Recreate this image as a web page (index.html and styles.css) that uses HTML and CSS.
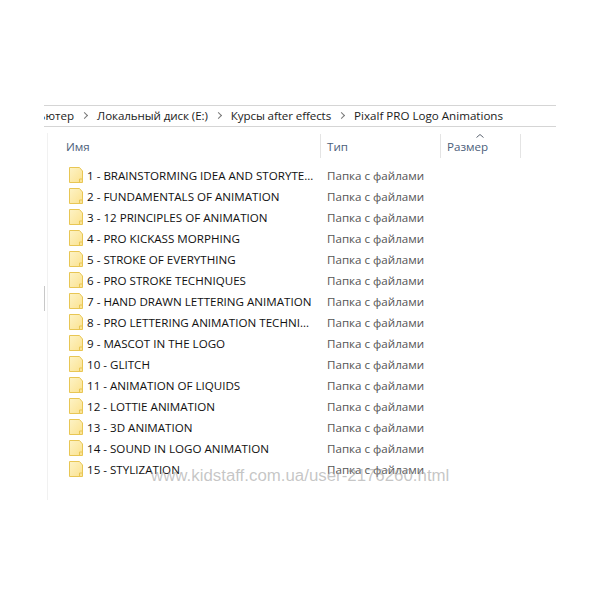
FILE: index.html
```html
<!DOCTYPE html>
<html lang="ru">
<head>
<meta charset="utf-8">
<title>Pixalf PRO Logo Animations</title>
<link rel="stylesheet" href="styles.css">
</head>
<body>
<svg class="defs" width="0" height="0" aria-hidden="true">
  <defs>
    <linearGradient id="fg" x1="0" y1="0" x2="1" y2="1">
      <stop offset="0" stop-color="#fdf3c6"/>
      <stop offset="1" stop-color="#fbe290"/>
    </linearGradient>
    <symbol id="folder" viewBox="0 0 14 16">
      <path d="M.5.5H10.5L13.5 4V15.5H.5Z" fill="url(#fg)" stroke="#e8c654"/>
      <path d="M10.5 15V12H13" fill="none" stroke="#e8c654"/>
    </symbol>
  </defs>
</svg>
<main class="explorer">
  <nav class="path">
    <span>Компьютер</span><i class="sep"></i>
    <span class="tight">Локальный диск (E:)</span><i class="sep"></i>
    <span class="tight">Курсы after effects</span><i class="sep"></i>
    <span>Pixalf PRO Logo Animations</span>
  </nav>
  <section class="list">
    <header class="cols">
      <div class="col col-name">Имя</div>
      <div class="col col-type">Тип</div>
      <div class="col col-size"><svg class="sort" viewBox="0 0 8 4" width="8" height="4"><path d="M.5 3.5L4 .5L7.5 3.5" fill="none" stroke="#5b6470"/></svg>Размер</div>
    </header>
    <ul class="rows">
      <li class="row"><svg class="ico"><use href="#folder"/></svg><span class="name">1 - BRAINSTORMING IDEA AND STORYTELLING</span><span class="type">Папка с файлами</span></li>
      <li class="row"><svg class="ico"><use href="#folder"/></svg><span class="name">2 - FUNDAMENTALS OF ANIMATION</span><span class="type">Папка с файлами</span></li>
      <li class="row"><svg class="ico"><use href="#folder"/></svg><span class="name">3 - 12 PRINCIPLES OF ANIMATION</span><span class="type">Папка с файлами</span></li>
      <li class="row"><svg class="ico"><use href="#folder"/></svg><span class="name">4 - PRO KICKASS MORPHING</span><span class="type">Папка с файлами</span></li>
      <li class="row"><svg class="ico"><use href="#folder"/></svg><span class="name">5 - STROKE OF EVERYTHING</span><span class="type">Папка с файлами</span></li>
      <li class="row"><svg class="ico"><use href="#folder"/></svg><span class="name">6 - PRO STROKE TECHNIQUES</span><span class="type">Папка с файлами</span></li>
      <li class="row"><svg class="ico"><use href="#folder"/></svg><span class="name">7 - HAND DRAWN LETTERING ANIMATION</span><span class="type">Папка с файлами</span></li>
      <li class="row"><svg class="ico"><use href="#folder"/></svg><span class="name">8 - PRO LETTERING ANIMATION TECHNIQUES</span><span class="type">Папка с файлами</span></li>
      <li class="row"><svg class="ico"><use href="#folder"/></svg><span class="name">9 - MASCOT IN THE LOGO</span><span class="type">Папка с файлами</span></li>
      <li class="row"><svg class="ico"><use href="#folder"/></svg><span class="name">10 - GLITCH</span><span class="type">Папка с файлами</span></li>
      <li class="row"><svg class="ico"><use href="#folder"/></svg><span class="name">11 - ANIMATION OF LIQUIDS</span><span class="type">Папка с файлами</span></li>
      <li class="row"><svg class="ico"><use href="#folder"/></svg><span class="name">12 - LOTTIE ANIMATION</span><span class="type">Папка с файлами</span></li>
      <li class="row"><svg class="ico"><use href="#folder"/></svg><span class="name">13 - 3D ANIMATION</span><span class="type">Папка с файлами</span></li>
      <li class="row"><svg class="ico"><use href="#folder"/></svg><span class="name">14 - SOUND IN LOGO ANIMATION</span><span class="type">Папка с файлами</span></li>
      <li class="row"><svg class="ico"><use href="#folder"/></svg><span class="name">15 - STYLIZATION</span><span class="type">Папка с файлами</span></li>
    </ul>
  </section>
  <div class="thumb"></div>
</main>
<div class="watermark">www.kidstaff.com.ua/user-2176260.html</div>
</body>
</html>
```

FILE: styles.css
```css
* { box-sizing: border-box; }
html, body { margin: 0; height: 100%; background: #fff; overflow: hidden; }
body {
  position: relative;
  padding: 105px 44px 0;
  font-family: "Open Sans", "Noto Sans", sans-serif;
  font-size: 11.6px;
  color: #1c1c1c;
}
.defs { position: absolute; }
.explorer { position: relative; width: 512px; }
.path {
  height: 22px;
  display: flex;
  justify-content: flex-end;
  align-items: center;
  padding: 0 53px 1px 0;
  border-top: 1px solid #d5d5d5;
  border-bottom: 1px solid #d5d5d5;
  overflow: hidden;
  white-space: nowrap;
}
.path span { flex: none; }
.path .tight { letter-spacing: -0.1px; }
.sep {
  flex: none;
  width: 5px;
  height: 5px;
  margin: 0 10px 0 8px;
  border-top: 1.4px solid #777;
  border-right: 1.4px solid #777;
  transform: rotate(45deg);
}
.list {
  margin: 6px 0 0 3px;
  padding-top: 1px;
  height: 367px;
  border-left: 1px solid #f1f1f1;
}
.cols {
  height: 24px;
  display: grid;
  grid-template-columns: 273px 120px 80px;
}
.col {
  position: relative;
  display: flex;
  align-items: center;
  padding-left: 6px;
  border-right: 1px solid #e4e4e4;
  color: #4c607a;
}
.col-name { padding-left: 18px; }
.sort { position: absolute; left: 35px; top: 0; }
.rows { list-style: none; margin: 6.5px 0 0; padding: 0; }
.row {
  height: 21px;
  display: grid;
  grid-template-columns: 14px 229px auto;
  column-gap: 4px;
  align-items: center;
  padding-left: 21px;
  color: #111;
}
.ico { width: 14px; height: 16px; }
.name { overflow: hidden; white-space: nowrap; text-overflow: ellipsis; }
.type { margin-left: 7px; color: #555; }
.thumb {
  position: absolute;
  left: 0;
  top: 181px;
  width: 1px;
  height: 25px;
  background: #c8c8c8;
}
.watermark {
  position: absolute;
  left: 151px;
  top: 466px;
  font-family: "Liberation Sans", sans-serif;
  font-size: 16.85px;
  color: rgba(160, 160, 160, .6);
  white-space: nowrap;
}
```
